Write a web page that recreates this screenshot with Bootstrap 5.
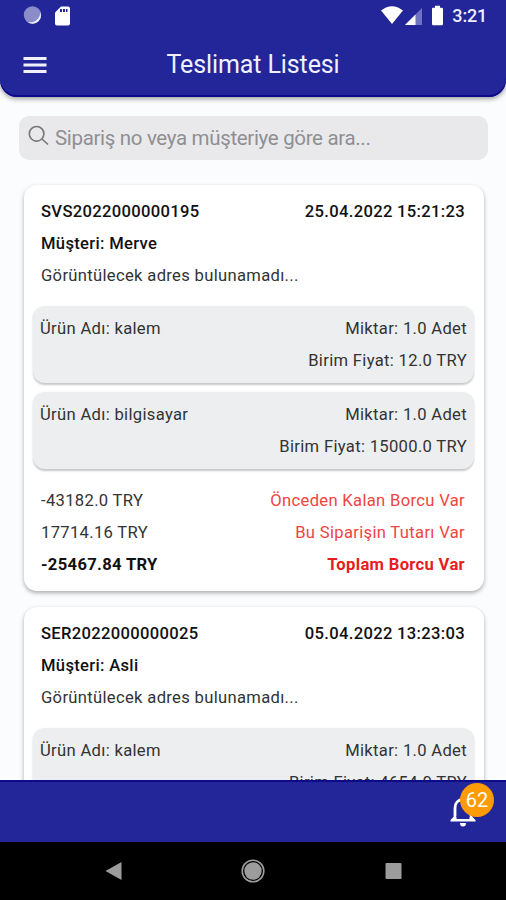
<!DOCTYPE html>
<html lang="tr">
<head>
<meta charset="utf-8">
<meta name="viewport" content="width=device-width, initial-scale=1">
<title>Teslimat Listesi</title>
<link href="https://cdn.jsdelivr.net/npm/bootstrap@5.3.0/dist/css/bootstrap.min.css" rel="stylesheet">
<style>
  body { font-family: Roboto, "Noto Sans", sans-serif; background: #fafcfe; color: #222; }
  svg { display: block; flex: none; }
  .screen { height: 900px; }
  .app-header { height: 97px; background: #232699; border-radius: 0 0 17px 17px; box-shadow: 0 2px 5px rgba(0,0,0,.38), inset 0 -2px 0 #0d0b8c; }
  .status-row { height: 32px; padding: 0 19px 0 23px; }
  .clock { font-size: 18px; font-weight: 500; line-height: 32px; margin-left: 8px; letter-spacing: -.2px; color: #eeeeff; }
  .title-row { height: 65px; display: grid; grid-template-columns: 24px 1fr 24px; align-items: center; padding: 0 23px; }
  .title-row h1 { font-size: 25px; font-weight: 400; letter-spacing: -.1px; color: #f0f0ff; margin: 0; white-space: nowrap; }
  .search-box { height: 44px; margin: 19px 18px 25px 19px; background: #e9e9eb; border-radius: 10px; padding: 0 9px; color: #8f8f93; font-size: 20.5px; letter-spacing: -.33px; }
  .search-box svg { margin: 0 5px 4px 0; }
  .search-text { padding-top: 1px; }
  .delivery { width: 460px; margin: 0 22px 16px 24px; padding: 11px 9px 10.4px; border: 0; border-radius: 13px; box-shadow: 0 2px 4px rgba(0,0,0,.32); font-size: 16.6px; line-height: 31.8px; letter-spacing: .32px; color: #333; }
  .delivery .line { padding: 0 10px 0 8px; height: 31.8px; white-space: nowrap; }
  .delivery .strong-line { font-weight: 500; color: #111; }
  .product { height: 77px; margin-bottom: 9px; padding: 6.4px 7px 0 7px; line-height: 32px; background: #eceeef; border-radius: 12px; box-shadow: 0 1.5px 2px rgba(0,0,0,.22); }
  .products { margin: 14.8px 1px 7px 0; }
  .debt { color: #f0443f; }
  .total-line { color: #111; }
  .debt-total { color: #e81c1c; font-weight: 700; }
  .bottom-bar { height: 62px; background: #232699; border-top: 2px solid #0d0b88; padding: 12px 28px 0 0; }
  .count { left: 12px; top: -11px; width: 34px; height: 34px; background: #ff9b05; font-size: 20px; line-height: 34px; }
  .nav-keys { height: 58px; background: #000; }
</style>
</head>
<body>
<div class="screen d-flex flex-column overflow-hidden">
  <header class="app-header text-white flex-shrink-0 position-relative z-1">
    <div class="status-row d-flex align-items-center">
      <svg width="20" height="20" viewBox="0 0 20 20"><circle cx="9.500" cy="9" r="8.700" fill="#8b8dcb"/><path d="M17.500 6.500a8.500 8.500 0 0 1-13 9.500c6 1.500 12-2 13-9.500z" fill="#eef0ff"/></svg>
      <svg class="ms-2" width="24" height="20" viewBox="0 0 24 20"><path d="M10 .5h7q2 0 2 2v15q0 2-2 2H6q-2 0-2-2v-11z" fill="#fff"/><path d="M9 3h2v3h-2zM12 3h2v3h-2zM15 3h1.500v3h-1.500z" fill="#232699"/></svg>
      <svg class="ms-auto" width="63" height="22" viewBox="0 0 63 22"><path d="M0 5.500Q11-3 22 5.500L11 19z" fill="#fff"/><path d="M24 20L41 3v17z" fill="#7073c1"/><path d="M24 20L34.500 9.500V20z" fill="#fff"/><path d="M54 .7h5v2h1.500q1.500 0 1.500 1V19q0 1.300-1.300 1.300h-8.500Q51 20.300 51 19V3.700q0-1 1-1h2z" fill="#fff"/></svg>
      <span class="clock">3:21</span>
    </div>
    <div class="title-row text-center">
      <svg width="24" height="18" viewBox="0 0 24 18"><path d="M0.500 2.500h23M0.500 9h23M0.500 15.500h23" stroke="#f0f0ff" stroke-width="2.800"/></svg>
      <h1>Teslimat Listesi</h1>
    </div>
  </header>

  <main class="flex-grow-1 overflow-hidden">
    <div class="search-box d-flex align-items-center">
      <svg width="22" height="22" viewBox="0 0 22 22" fill="none" stroke="#77777b" stroke-width="1.600"><circle cx="8.600" cy="8.800" r="7.300"/><path d="M14 14l6 5.500"/></svg>
      <span class="search-text">Sipariş no veya müşteriye göre ara...</span>
    </div>

    <article class="delivery card">
      <div class="line strong-line d-flex justify-content-between"><span>SVS2022000000195</span><span>25.04.2022 15:21:23</span></div>
      <div class="line strong-line"><span>Müşteri: Merve</span></div>
      <div class="line"><span>Görüntülecek adres bulunamadı...</span></div>
      <div class="products">
        <div class="product">
          <div class="d-flex justify-content-between"><span>Ürün Adı: kalem</span><span>Miktar: 1.0 Adet</span></div>
          <div class="text-end"><span>Birim Fiyat: 12.0 TRY</span></div>
        </div>
        <div class="product">
          <div class="d-flex justify-content-between"><span>Ürün Adı: bilgisayar</span><span>Miktar: 1.0 Adet</span></div>
          <div class="text-end"><span>Birim Fiyat: 15000.0 TRY</span></div>
        </div>
      </div>
      <div class="line d-flex justify-content-between"><span>-43182.0 TRY</span><span class="debt">Önceden Kalan Borcu Var</span></div>
      <div class="line d-flex justify-content-between"><span>17714.16 TRY</span><span class="debt">Bu Siparişin Tutarı Var</span></div>
      <div class="line total-line d-flex justify-content-between"><span class="fw-bold">-25467.84 TRY</span><span class="debt-total">Toplam Borcu Var</span></div>
    </article>

    <article class="delivery card">
      <div class="line strong-line d-flex justify-content-between"><span>SER2022000000025</span><span>05.04.2022 13:23:03</span></div>
      <div class="line strong-line"><span>Müşteri: Asli</span></div>
      <div class="line"><span>Görüntülecek adres bulunamadı...</span></div>
      <div class="products">
        <div class="product">
          <div class="d-flex justify-content-between"><span>Ürün Adı: kalem</span><span>Miktar: 1.0 Adet</span></div>
          <div class="text-end"><span>Birim Fiyat: 4654.0 TRY</span></div>
        </div>
      </div>
    </article>
  </main>

  <footer class="flex-shrink-0">
    <div class="bottom-bar d-flex justify-content-end">
      <div class="position-relative">
        <svg width="30" height="34" viewBox="0 0 30 34"><path d="M15 5.500c-5 0-8 3.500-8 8.500v10.500h16V14c0-5-3-8.500-8-8.500z" fill="none" stroke="#fff" stroke-width="2.800"/><path d="M2.500 27.500v-1.500l3-3h19l3 3v1.500zM12 29h6q0 3.500-3 3.500t-3-3.500z" fill="#fff"/><path d="M8.500 22h13v3h-13z" fill="#232699"/></svg>
        <span class="count position-absolute rounded-circle text-white text-center">62</span>
      </div>
    </div>
    <div class="nav-keys">
      <svg width="506" height="58" viewBox="0 0 506 58"><path d="M105.500 29L121.500 20v18z" fill="#9c9c9c"/><circle cx="253" cy="29" r="8.700" fill="#9c9c9c"/><circle cx="253" cy="29" r="10.800" fill="none" stroke="#9c9c9c" stroke-width="1.600"/><rect x="385.500" y="21" width="16" height="16" rx="1" fill="#9c9c9c"/></svg>
    </div>
  </footer>
</div>
<script src="https://cdn.jsdelivr.net/npm/bootstrap@5.3.0/dist/js/bootstrap.bundle.min.js"></script>
</body>
</html>
